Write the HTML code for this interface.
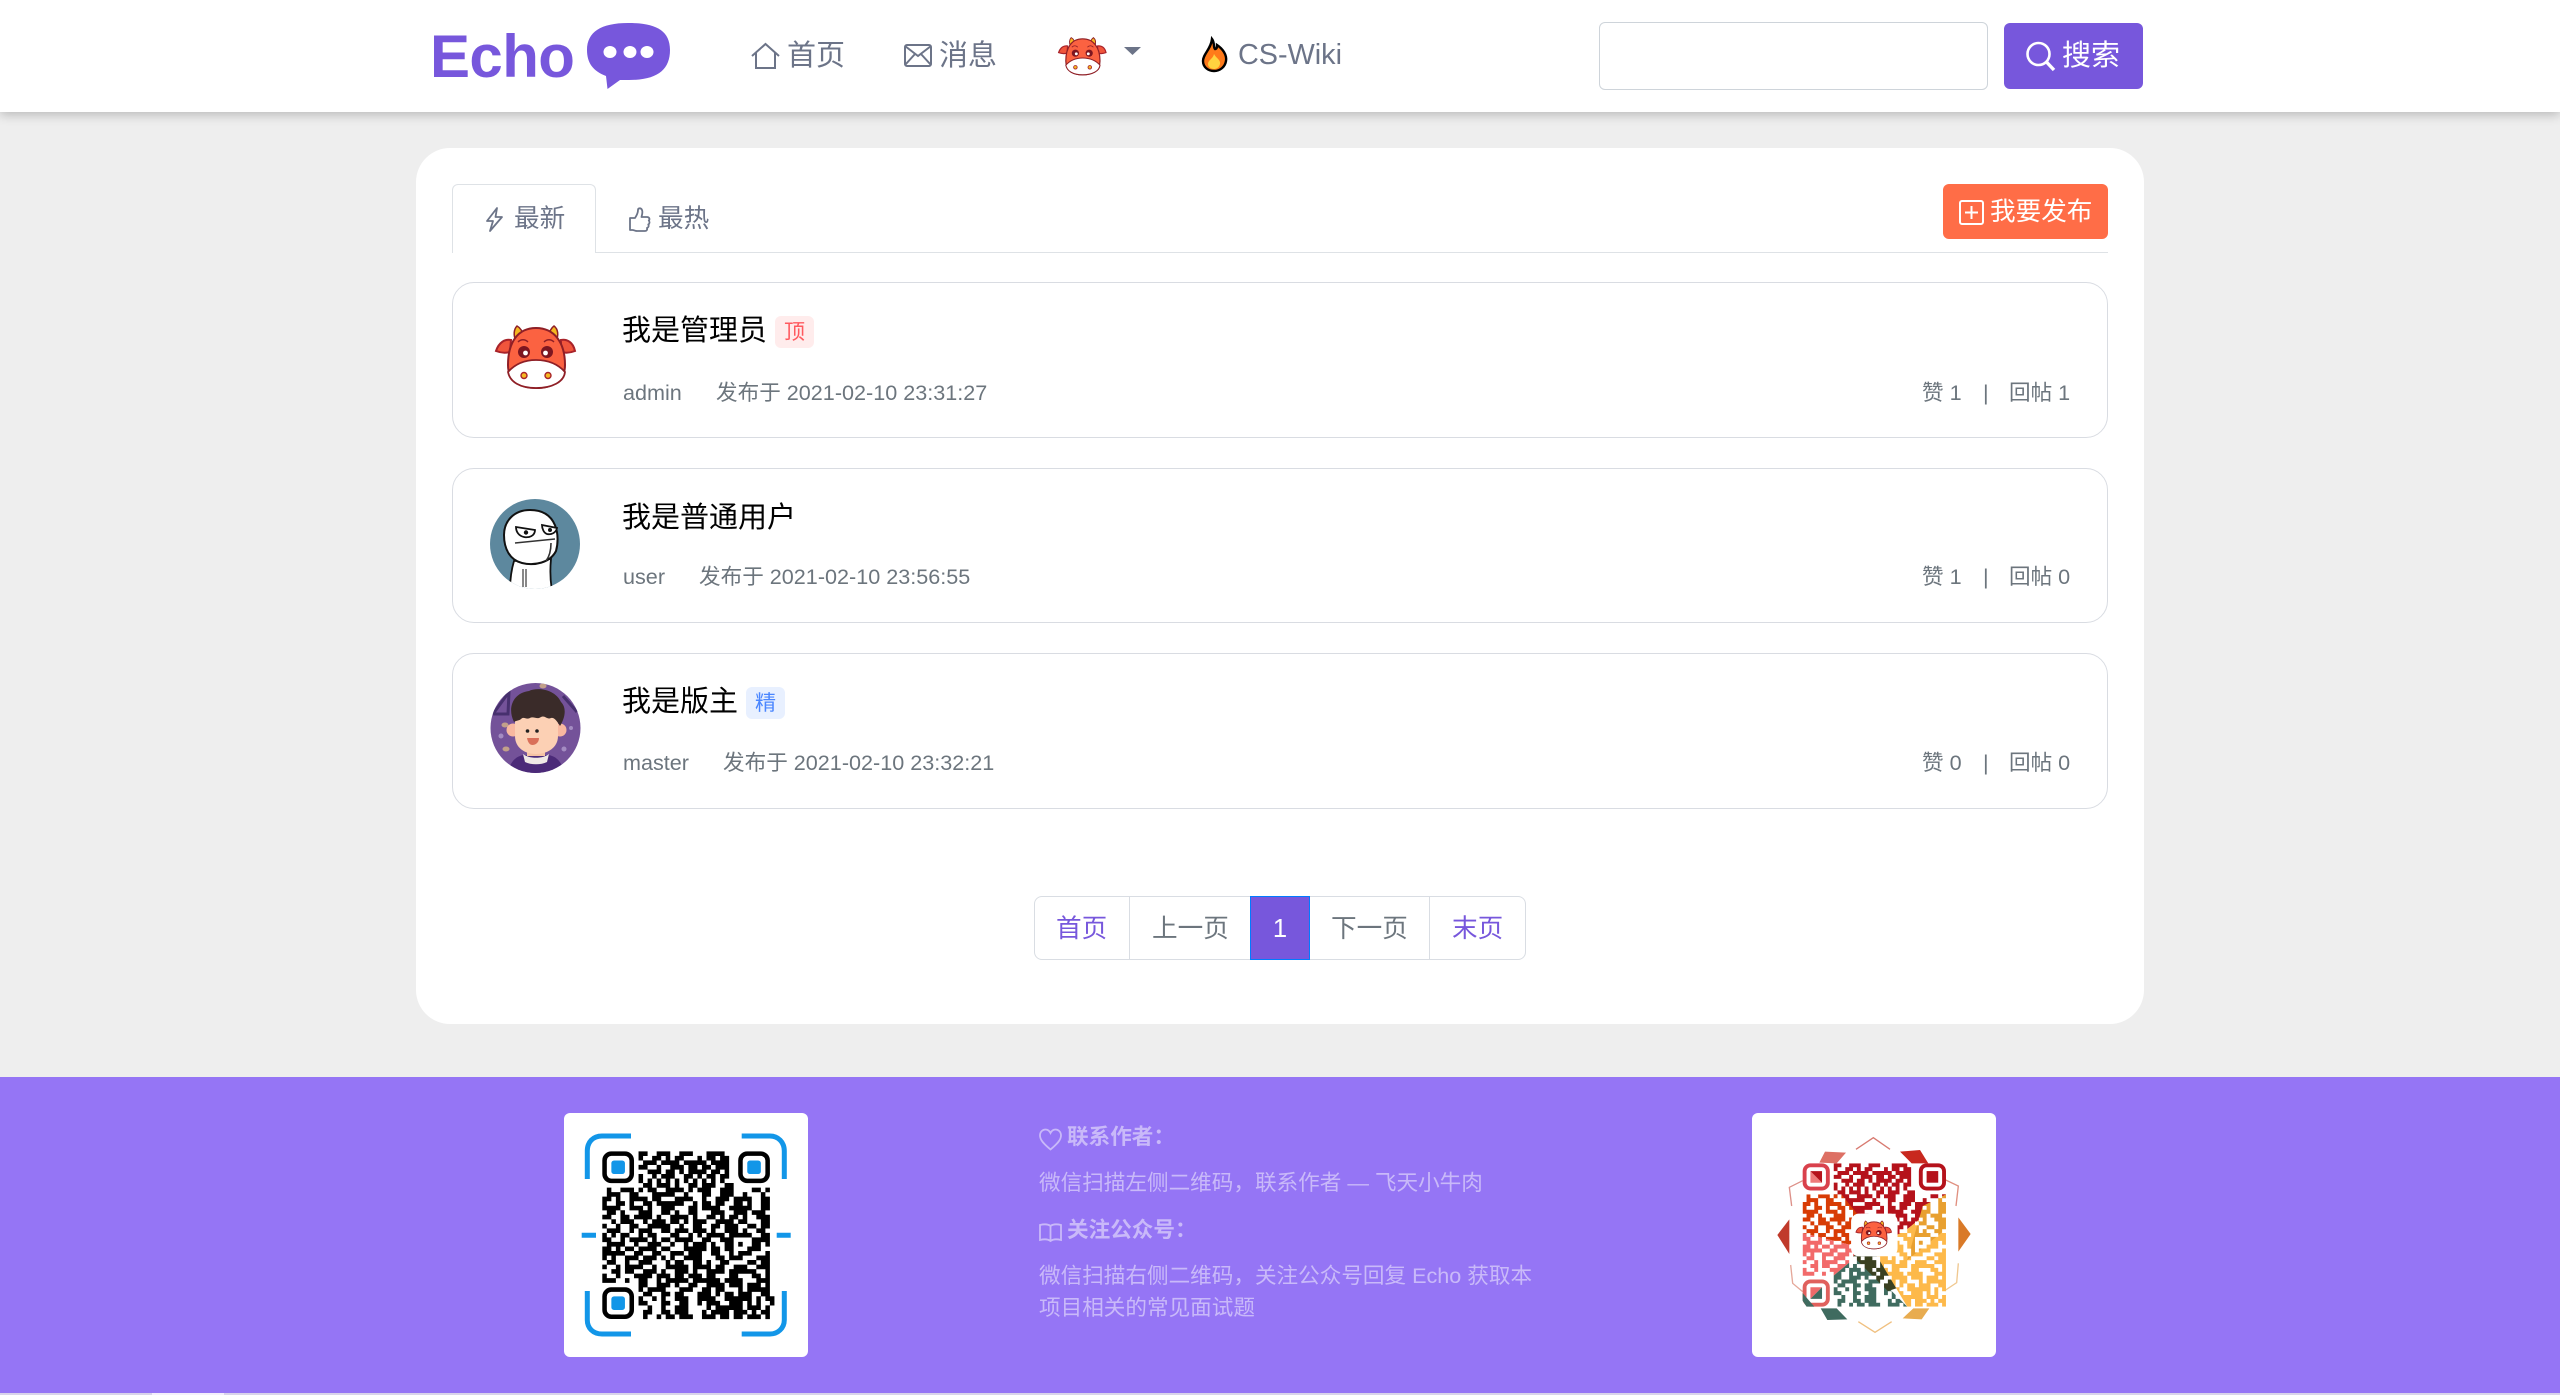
<!DOCTYPE html>
<html lang="zh-CN">
<head>
<meta charset="utf-8">
<title>Echo</title>
<style>
html,body{margin:0;padding:0;background:#eee}
body{position:relative;width:2560px;height:1395px;overflow:hidden;font-family:"Liberation Sans","Noto Sans CJK SC",sans-serif}
.a{position:absolute;box-sizing:border-box}
.t{position:absolute;white-space:nowrap;line-height:40px;height:40px}
svg{position:absolute;display:block;overflow:visible}
.nav{font-size:29px;color:#6c7488}
.tab{font-size:25.6px;color:#6c7488}
.title{font-size:29px;color:#000}
.meta{font-size:21.6px;color:#6c757d}
.card{position:absolute;box-sizing:border-box;left:452px;width:1656px;background:#fff;border:1px solid #d9dce2;border-radius:22px}
.tag{position:absolute;width:39px;height:32px;border-radius:6px;font-size:21px;line-height:34px;text-align:center}
.pg{position:absolute;top:909px;font-size:25.6px;line-height:40px;height:40px;white-space:nowrap;color:#6c757d}
.ft{position:absolute;white-space:nowrap;font-size:21.6px;line-height:32px;height:32px;color:#c9b9f9}
.fh{font-weight:bold}
</style>
</head>
<body>
<svg width="0" height="0" style="position:absolute">
<defs>
<symbol id="cow" viewBox="0 0 100 90">
<path d="M31 26C28 20 29 14 32 11C36 13 38 18 39 22ZM71 26C74 20 73 14 69 11C66 13 64 18 63 22Z" fill="#f5b921" stroke="#8f1f26" stroke-width="1.5"/>
<path d="M26 25C20 24 14 27 11 36C16 38 21 38 25 37ZM76 25C82 24 88 27 90 36C85 38 80 38 76 37Z" fill="#f0553c" stroke="#a8232a" stroke-width="2"/>
<path d="M51 13C33 13 23 27 23 50C23 66 35 73 51 73C67 73 80 66 80 50C80 27 69 13 51 13Z" fill="#fb6241" stroke="#8f1f26" stroke-width="2"/>
<path d="M23 57C31 48 41 45 51 45C62 45 72 48 80 57C79 67 67 73 51 73C35 73 25 67 23 57Z" fill="#fff" stroke="#8f1f26" stroke-width="1.8"/>
<circle cx="39" cy="37" r="6" fill="#7d1620"/><circle cx="62" cy="37" r="6" fill="#7d1620"/>
<circle cx="40.5" cy="38" r="2.4" fill="#fff"/><circle cx="60.5" cy="38" r="2.4" fill="#fff"/>
<circle cx="39" cy="60.500" r="3" fill="#f5b921" stroke="#a8232a" stroke-width="1.4"/><circle cx="63" cy="60.500" r="3" fill="#f5b921" stroke="#a8232a" stroke-width="1.4"/>
<path d="M33 27C36 24 40 24 43 27M59 27C62 24 66 24 69 27" fill="none" stroke="#8f1f26" stroke-width="1.4"/>
</symbol>
<path id="qrd" fill="none" stroke-width="1.03" d="M8 .5h2m2 0h3m2 0h3m3 0h4M8 1.500h1m2 0h2m1 0h1m1 0h2m3 0h1m1 0h2m1 0h2M9 2.500h3m1 0h4m1 0h5m1 0h4M8 3.500h2m2 0h1m2 0h3m1 0h2m1 0h2m1 0h3M10 4.500h3m1 0h2m1 0h1m1 0h4m1 0h2m1 0h1M8 5.500h1m2 0h1m1 0h3m2 0h2m1 0h1m1 0h2m1 0h2M8 6.500h1m1 0h1m1 0h1m1 0h1m1 0h1m1 0h1m1 0h1m1 0h1m1 0h1m1 0h1M9 7.500h2m1 0h3m1 0h1m2 0h2m1 0h3m2 0h2M1 8.500h1m2 0h3m1 0h1m1 0h2m2 0h4m1 0h1m1 0h3m2 0h3m4 0h2m1 0h1M1 9.500h3m2 0h2m3 0h5m2 0h1m3 0h2m2 0h3m2 0h1m3 0h1M0 10.500h2m1 0h1m2 0h4m1 0h2m3 0h4m2 0h1m2 0h3m1 0h2M0 11.500h1m2 0h2m1 0h1m2 0h2m1 0h6m2 0h1m1 0h2m1 0h2m2 0h2M0 12.500h4m2 0h3m1 0h1m2 0h3m3 0h2m1 0h4m2 0h3M1 13.500h2m1 0h1m3 0h3m2 0h2m1 0h1m2 0h2m3 0h3m2 0h3M0 14.500h2m2 0h2m1 0h4m1 0h1m2 0h4m1 0h1m2 0h2m1 0h1m1 0h2M2 15.500h1m1 0h3m2 0h1m1 0h3m1 0h2m1 0h1m1 0h3m2 0h4M0 16.500h1m2 0h1m2 0h2m2 0h5m2 0h1m2 0h2m2 0h2m1 0h3M1 17.500h3m2 0h1m1 0h3m2 0h2m1 0h3m1 0h3m1 0h1m2 0h3M0 18.500h1m1 0h1m1 0h2m2 0h1m1 0h2m3 0h2m2 0h1m1 0h1m1 0h4m1 0h2M0 19.500h2m2 0h1m1 0h4m1 0h1m1 0h2m1 0h4m2 0h2m2 0h3M1 20.500h4m2 0h1m2 0h3m2 0h1m2 0h1m1 0h3m1 0h1m2 0h2m1 0h1M0 21.500h2m1 0h1m1 0h2m1 0h4m1 0h2m3 0h5m1 0h2m1 0h2M0 22.500h5m2 0h2m2 0h2m2 0h3m1 0h3m2 0h2m2 0h1m1 0h1M0 23.500h1m1 0h1m2 0h3m1 0h3m1 0h1m1 0h1m2 0h4m3 0h2m1 0h2M1 24.500h2m2 0h1m2 0h3m3 0h1m1 0h2m2 0h2m1 0h1m2 0h2M0 25.500h1m2 0h1m1 0h4m2 0h1m2 0h5m1 0h4m1 0h2m2 0h3M2 26.500h2m1 0h2m2 0h3m1 0h1m2 0h3m1 0h1m2 0h4m1 0h3M0 27.500h1m2 0h1m3 0h4m1 0h3m1 0h2m1 0h3m1 0h2m3 0h2M0 28.500h3m2 0h1m2 0h2m2 0h1m1 0h5m1 0h6m1 0h3M8 29.500h2m2 0h3m1 0h1m2 0h2m2 0h4m1 0h1m1 0h1m1 0h2M8 30.500h1m1 0h4m3 0h3m2 0h2m1 0h2m3 0h1m1 0h2M9 31.500h2m2 0h2m1 0h2m3 0h3m1 0h1m1 0h2m1 0h1M8 32.500h1m2 0h1m1 0h1m2 0h3m2 0h4m2 0h3m1 0h2M8 33.500h2m3 0h2m2 0h2m2 0h1m1 0h3m2 0h1m1 0h1m1 0h1M10 34.500h1m2 0h1m2 0h3m4 0h1m1 0h3m1 0h2m1 0h2M9 35.500h2m2 0h2m1 0h3m3 0h1m1 0h4m1 0h3m1 0h1M9 36.500h1m2 0h1m1 0h2m1 0h3m2 0h3m1 0h2m2 0h1m1 0h1M31 10.500h2m2 0h2M32 11.500h1m2 0h2M30 12.500h3m2 0h2M33 13.500h3M31 14.500h1m2 0h3M30 15.500h2m3 0h2M32 16.500h2m1 0h2M31 17.500h1m2 0h2M30 18.500h3m2 0h2M33 19.500h4M30 20.500h1m2 0h2m1 0h1M32 21.500h3M31 22.500h2m3 0h1M30 23.500h1m3 0h3M32 24.500h2m1 0h2M34 25.500h3M31 26.500h3m2 0h1M33 27.500h2m1 0h1M30 28.500h1m3 0h3M28 29.500h2m3 0h2m1 0h1M30 30.500h1m3 0h3M28 31.500h1m1 0h3m2 0h2M30 32.500h1m1 0h1m1 0h1m1 0h2M29 33.500h2m1 0h1m1 0h1m2 0h1M28 34.500h2m2 0h3m1 0h1M31 35.500h1m3 0h2M29 36.500h1m2 0h3m1 0h1"/>
<mask id="qrm" maskUnits="userSpaceOnUse" x="-1" y="-1" width="39" height="39"><use href="#qrd" stroke="#fff"/><rect x="12.500" y="13" width="12" height="11" rx="2" fill="#000"/></mask>
<clipPath id="uc"><circle cx="45" cy="45" r="45"/></clipPath>
<clipPath id="mc"><circle cx="50.500" cy="50" r="45"/></clipPath>
</defs>
</svg>

<!-- header -->
<div class="a" style="left:0;top:0;width:2560px;height:112px;background:#fff;box-shadow:0 3px 10px rgba(0,0,0,.22)"></div>
<div class="t" style="left:430px;top:22px;height:70px;line-height:70px;font-size:60px;font-weight:bold;letter-spacing:-.6px;color:#7757dc">Echo</div>
<svg style="left:587px;top:23px" width="83" height="66" viewBox="0 0 83 66"><path d="M41 0C68 0 83 7 83 27C83 47 70 57 42 57H33L20.500 66L19 53C6 48 0 40 0 27C0 9 14 0 41 0Z" fill="#7757dc"/><ellipse cx="23" cy="29" rx="6.500" ry="6" fill="#fff"/><ellipse cx="43" cy="29" rx="6.500" ry="6" fill="#fff"/><ellipse cx="60" cy="29" rx="6.500" ry="6" fill="#fff"/></svg>

<svg style="left:751px;top:43px" width="29" height="26" viewBox="0 0 29 26" fill="none" stroke="#6c7488" stroke-width="2"><path d="M1 13L14.500 1L28 13M5 10V25H24V10"/></svg>
<div class="t nav" style="left:787px;top:36px">首页</div>
<svg style="left:904px;top:44px" width="28" height="23" viewBox="0 0 28 23" fill="none" stroke="#6c7488" stroke-width="2"><rect x="1" y="1" width="26" height="21" rx="2"/><path d="M1 2L14 12L27 2M1 21L11 10M27 21L17 10"/></svg>
<div class="t nav" style="left:939px;top:36px">消息</div>
<svg style="left:1052px;top:31px" width="60" height="54"><use href="#cow" width="60" height="54"/></svg>
<svg style="left:1124px;top:47px" width="17" height="8" viewBox="0 0 17 8"><path d="M0 0H17L8.500 8Z" fill="#6c7488"/></svg>
<svg style="left:1201px;top:38px" width="27" height="34" viewBox="0 0 27 34"><path d="M11 1C14 5 12 9 14 11C16 11 16 9 16 7C22 11 26 17 25 23C24 29 19 33 13 33C7 33 2 29 2 23C2 16 10 11 11 1Z" fill="#ff7a1a" stroke="#000" stroke-width="2.400"/><path d="M13 16C15 20 20 22 19 26C18 30 15 31 13 31C10 31 7 29 7 26C7 22 12 21 13 16Z" fill="#ffd23f"/></svg>
<div class="t nav" style="left:1238px;top:35px;font-size:28.8px">CS-Wiki</div>

<div class="a" style="left:1599px;top:22px;width:389px;height:68px;background:#fff;border:1px solid #ced4da;border-radius:6px"></div>
<div class="a" style="left:2004px;top:23px;width:139px;height:66px;background:#7757dc;border-radius:6px"></div>
<svg style="left:2026px;top:42px" width="30" height="29" viewBox="0 0 30 29" fill="none" stroke="#fff" stroke-width="2.600"><circle cx="12.500" cy="12" r="11"/><path d="M20.500 20L28 28" stroke-width="3.400"/></svg>
<div class="t" style="left:2062px;top:36px;font-size:29px;color:#fff">搜索</div>

<!-- main -->
<div class="a" style="left:416px;top:148px;width:1728px;height:876px;background:#fff;border-radius:34px"></div>
<div class="a" style="left:452px;top:252px;width:1656px;height:1px;background:#dee2e6"></div>
<div class="a" style="left:452px;top:184px;width:144px;height:69px;background:#fff;border:1px solid #dee2e6;border-bottom:0;border-radius:6px 6px 0 0"></div>
<svg style="left:485px;top:207px" width="19" height="25" viewBox="0 0 19 25" fill="none" stroke="#6c7488" stroke-width="1.800" stroke-linejoin="round"><path d="M12 1L2 14H8L5 24L17 10H10.500Z"/></svg>
<div class="t tab" style="left:514px;top:199px">最新</div>
<svg style="left:629px;top:207px" width="22" height="25" viewBox="0 0 22 25" fill="none" stroke="#6c7488" stroke-width="1.800" stroke-linejoin="round"><path d="M6 11C8 8 9 5 9 3C9 1 12 .5 13 3C14 5 13 8 12.500 10H18C20.500 10 21 12.500 19.800 13.500C21 15 20.500 17 19.300 17.500C20 19 19.500 20.500 18 21C18.500 23 17.500 24 16 24H8C6 24 5 23 3.500 23H1V11Z"/></svg>
<div class="t tab" style="left:658px;top:199px">最热</div>
<div class="a" style="left:1943px;top:184px;width:165px;height:55px;background:#ff6d47;border-radius:6px"></div>
<svg style="left:1959px;top:200px" width="25" height="25" viewBox="0 0 25 25" fill="none" stroke="#fff" stroke-width="2"><rect x="1" y="1" width="23" height="23" rx="2"/><path d="M12.500 6V19M6 12.500H19"/></svg>
<div class="t" style="left:1990px;top:192px;font-size:25.6px;color:#fff">我要发布</div>

<!-- post 1 -->
<div class="card" style="top:282px;height:156px"></div>
<svg style="left:485px;top:315px" width="100" height="90"><use href="#cow" width="100" height="90"/></svg>
<div class="t title" style="left:622px;top:311px">我是管理员</div>
<div class="tag" style="left:775px;top:316px;background:#ffecec;color:#ff5a5f">顶</div>
<div class="t meta" style="left:623px;top:373px">admin</div>
<div class="t meta" style="left:716px;top:373px">发布于 2021-02-10 23:31:27</div>
<div class="t meta" style="left:1922px;top:373px">赞 1</div>
<div class="t meta" style="left:1983px;top:373px">|</div>
<div class="t meta" style="left:2009px;top:373px">回帖 1</div>

<!-- post 2 -->
<div class="card" style="top:468px;height:155px"></div>
<svg style="left:490px;top:499px" width="90" height="90" viewBox="0 0 90 90"><g clip-path="url(#uc)"><rect width="90" height="90" fill="#5d889e"/><path d="M24 62C21 72 20 82 20 92H62C60 80 60 70 61 60Z" fill="#fff" stroke="#111" stroke-width="1.800"/><path d="M40 11C24 11 14 22 14 36C14 50 20 61 32 64C44 67 60 64 66 52C70 38 68 11 40 11Z" fill="#fff" stroke="#111" stroke-width="2"/><path d="M26 28L45 31C45 37 39 39 34 38C29 37 26 33 26 28ZM52 26L67 29C66 34 61 36 57 35C54 34 52 30 52 26Z" fill="#fff" stroke="#111" stroke-width="1.800"/><circle cx="36" cy="33.500" r="2.200" fill="#111"/><circle cx="60" cy="31" r="2" fill="#111"/><path d="M25 44L65 40M61 44C61 52 59 58 56 62" fill="none" stroke="#333" stroke-width="1.600"/><path d="M33 70V88M36 70V88" fill="none" stroke="#555" stroke-width="1.400"/></g></svg>
<div class="t title" style="left:622px;top:498px">我是普通用户</div>
<div class="t meta" style="left:623px;top:557px">user</div>
<div class="t meta" style="left:699px;top:557px">发布于 2021-02-10 23:56:55</div>
<div class="t meta" style="left:1922px;top:557px">赞 1</div>
<div class="t meta" style="left:1983px;top:557px">|</div>
<div class="t meta" style="left:2009px;top:557px">回帖 0</div>

<!-- post 3 -->
<div class="card" style="top:653px;height:156px"></div>
<svg style="left:485px;top:678px" width="100" height="100" viewBox="0 0 100 100"><g clip-path="url(#mc)"><rect width="100" height="100" fill="#745299"/><path d="M8 36L24 14L23 36H8M78 18L92 34" fill="none" stroke="#47306e" stroke-width="3"/><g fill="#c2a08a"><ellipse cx="20" cy="47" rx="3.500" ry="2.500"/><ellipse cx="21" cy="71" rx="3.500" ry="2.500"/><ellipse cx="58" cy="8" rx="3.500" ry="2.500"/></g><g fill="#a48cc2"><circle cx="16" cy="58" r="2.500"/><circle cx="79" cy="71" r="2.500"/><circle cx="86" cy="50" r="2"/></g><path d="M22 100C24 84 30 79 38 77H64C72 79 78 84 80 100Z" fill="#4b2a78"/><path d="M38 76C44 81 58 81 64 76L62 84C56 87 46 87 40 84Z" fill="#efe9e6"/><rect x="42" y="66" width="18" height="12" fill="#f5c3a4"/><circle cx="28" cy="52" r="6.500" fill="#f8b8a0"/><circle cx="75" cy="52" r="6.500" fill="#f8b8a0"/><path d="M30 38H73V58C73 70 62 76 51 76C40 76 30 70 30 58Z" fill="#fcd0b4"/><path d="M29 44C22 30 28 15 44 13C52 9 70 11 76 24C82 30 80 40 75 48C72 43 69 39 66 40C62 42 60 37 56 39C52 42 49 38 45 40C41 42 39 38 36 41C34 43 32 42 29 44Z" fill="#3a2b29"/><circle cx="42.500" cy="53" r="1.800" fill="#222"/><circle cx="52" cy="53" r="1.800" fill="#222"/><path d="M42 60H54C54 65 50 67 47.500 67C45 67 43 65 42 60Z" fill="#d9705a"/></g></svg>
<div class="t title" style="left:622px;top:682px">我是版主</div>
<div class="tag" style="left:746px;top:687px;background:#e8f0ff;color:#4a86ff">精</div>
<div class="t meta" style="left:623px;top:743px">master</div>
<div class="t meta" style="left:723px;top:743px">发布于 2021-02-10 23:32:21</div>
<div class="t meta" style="left:1922px;top:743px">赞 0</div>
<div class="t meta" style="left:1983px;top:743px">|</div>
<div class="t meta" style="left:2009px;top:743px">回帖 0</div>

<!-- pagination -->
<div class="a" style="left:1034px;top:896px;width:492px;height:64px;background:#fff;border:1px solid #d9dde3;border-radius:8px"></div>
<div class="a" style="left:1129px;top:896px;width:1px;height:64px;background:#d9dde3"></div>
<div class="a" style="left:1429px;top:896px;width:1px;height:64px;background:#d9dde3"></div>
<div class="a" style="left:1250px;top:896px;width:60px;height:64px;background:#7757dc;border:1px solid #007bff"></div>
<div class="pg" style="left:1056px;color:#7757dc">首页</div>
<div class="pg" style="left:1152px">上一页</div>
<div class="pg" style="left:1250px;width:60px;text-align:center;color:#fff">1</div>
<div class="pg" style="left:1331px">下一页</div>
<div class="pg" style="left:1452px;color:#7757dc">末页</div>

<!-- footer -->
<div class="a" style="left:0;top:1077px;width:2560px;height:316px;background:#9575f5"></div>
<div class="a" style="left:0;top:1393px;width:2560px;height:2px;background:#d9d4ea"></div>
<div class="a" style="left:152px;top:1393px;width:72px;height:2px;background:#f4f0fb"></div>

<div class="a" style="left:564px;top:1113px;width:244px;height:244px;background:#fff;border-radius:6px"></div>
<svg style="left:564px;top:1113px" width="244" height="244" viewBox="0 0 244 244">
<g fill="none" stroke="#1296e8" stroke-width="5">
<path d="M67 23H38C29 23 23.300 29 23.300 38V66"/><path d="M177.700 23H206C214 23 220.300 29 220.300 38V66"/><path d="M23.300 178V207C23.300 215 29 221 38 221H67"/><path d="M220.300 178V207C220.300 215 214 221 206 221H177.700"/><path d="M17.700 122.300H32M212.700 122.300H226.700"/>
</g>
<g transform="translate(38.300 38.400) scale(4.530)">
<use href="#qrd" stroke="#000"/>
<g fill="none" stroke="#000"><rect x=".5" y=".5" width="6" height="6" rx="1.500"/><rect x="30.500" y=".5" width="6" height="6" rx="1.500"/><rect x=".5" y="30.500" width="6" height="6" rx="1.500"/></g>
<g fill="#1296e8"><rect x="2" y="2" width="3" height="3" rx=".6"/><rect x="32" y="2" width="3" height="3" rx=".6"/><rect x="2" y="32" width="3" height="3" rx=".6"/></g>
</g>
</svg>

<svg style="left:1039px;top:1128px" width="23" height="23" viewBox="0 0 23 23" fill="none" stroke="#c9b9f9" stroke-width="1.800"><path d="M11.500 21.500C5 16 1 12 1 7.500C1 3.500 4 1.500 6.500 1.500C9 1.500 10.500 3 11.500 5C12.500 3 14 1.500 16.500 1.500C19 1.500 22 3.500 22 7.500C22 12 18 16 11.500 21.500Z"/></svg>
<div class="ft fh" style="left:1067px;top:1121px">联系作者：</div>
<div class="ft" style="left:1039px;top:1167px">微信扫描左侧二维码，联系作者 — 飞天小牛肉</div>
<svg style="left:1039px;top:1223px" width="23" height="19" viewBox="0 0 23 19" fill="none" stroke="#c9b9f9" stroke-width="1.800"><path d="M11.500 3C9 1 5 1 1 2V17C5 16 9 16 11.500 18C14 16 18 16 22 17V2C18 1 14 1 11.500 3ZM11.500 3V18"/></svg>
<div class="ft fh" style="left:1067px;top:1214px">关注公众号：</div>
<div class="ft" style="left:1039px;top:1260px">微信扫描右侧二维码，关注公众号回复 Echo 获取本</div>
<div class="ft" style="left:1039px;top:1292px">项目相关的常见面试题</div>

<div class="a" style="left:1752px;top:1113px;width:244px;height:244px;background:#fff;border-radius:6px"></div>
<svg style="left:1740px;top:1100px" width="280" height="280" viewBox="0 0 840 840">
<g fill="none" stroke-width="4">
<path d="M348 148L400 113L450 148" stroke="#d87a70"/><path d="M355 665L405 697L455 665" stroke="#f0c080"/>
<path d="M188 242L148 262L155 318" stroke="#dd9088"/><path d="M617 240L655 258L648 318" stroke="#e09080"/>
<path d="M152 495L158 550L188 575" stroke="#e5a89a"/><path d="M655 490L650 548L617 570" stroke="#f0c890"/>
</g>
<path d="M148 358L112 405L148 462Z" fill="#c03a2b"/><path d="M655 352L692 402L655 455Z" fill="#d97a28"/>
<path d="M238 188L255 155L318 158L290 190Z" fill="#dd7064"/><path d="M480 155L540 150L565 190L515 190Z" fill="#c8281e"/>
<path d="M242 625L262 660L322 658L290 625Z" fill="#3f6b5f"/><path d="M488 655L545 658L568 625L520 625Z" fill="#e8ac50"/>
<g transform="translate(188 190) scale(11.620)">
<g mask="url(#qrm)">
<path d="M8 0H37V9L27 17L25 24L18.500 18.500L10 9H8Z" fill="#b5121b"/>
<path d="M0 8H10L18.500 18.500L12 21L0 18Z" fill="#d83c05"/>
<path d="M0 18L12 21L14 24L8 29V37H0Z" fill="#f26a6a"/>
<path d="M8 37V29L14 24L27 37Z" fill="#3f6b5f"/>
<path d="M13 24L17 21L25 32L22 33Z" fill="#3a4020"/>
<path d="M37 9V37H27L18 22L27 17Z" fill="#fdb94a"/>
<path d="M31 11L37 8V17L27 25Z" fill="#e8a030"/>
</g>
<g fill="none">
<rect x=".5" y=".5" width="6" height="6" rx="1.500" stroke="#d9414c"/><rect x="30.500" y=".5" width="6" height="6" rx="1.500" stroke="#b5121b"/><rect x=".5" y="30.500" width="6" height="6" rx="1.500" stroke="#e0605c"/>
</g>
<path d="M2 2L5 5H2Z" fill="#ee7a7a"/><path d="M2 2H5V5Z" fill="#b5121b"/>
<rect x="32" y="2" width="3" height="3" fill="#b5121b"/>
<path d="M2 35V32H5Z" fill="#ee6a6a"/><path d="M5 32V35H2Z" fill="#3f6b5f"/>
<path d="M0 35.500V33.500L3 37H1Z" fill="#3f6b5f"/>
</g>
</svg>
<svg style="left:1851px;top:1216px" width="45" height="40.500"><use href="#cow" width="45" height="40.500"/></svg>
</body>
</html>
